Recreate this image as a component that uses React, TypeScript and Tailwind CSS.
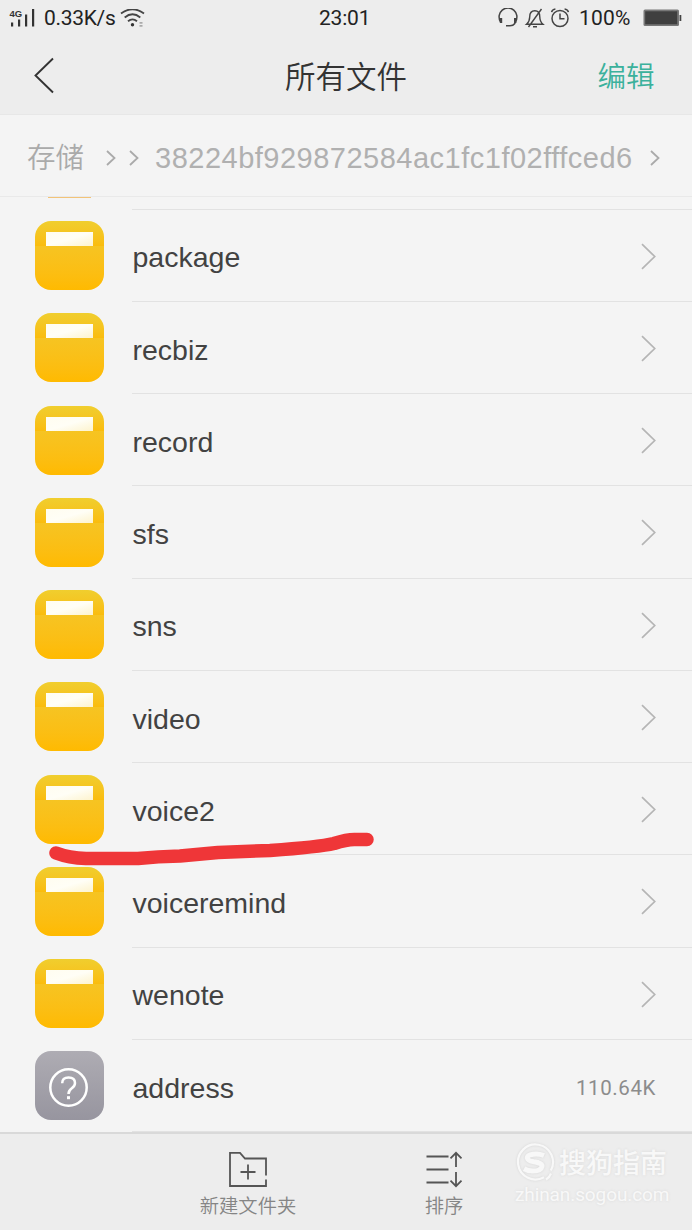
const folders = [
  "package",
  "recbiz",
  "record",
  "sfs",
  "sns",
  "video",
  "voice2",
  "voiceremind",
  "wenote",
];

function StatusBar() {
  return (
    <div className="relative flex h-[37px] items-center text-[#222] font-['Roboto','Noto_Sans',sans-serif]">
      <svg className="ml-[9px] h-[22px] w-[28px] shrink-0" viewBox="0 0 28 22" fill="#333">
        <text x="0.5" y="8.5" fontSize="9.5" fontWeight="700" fontFamily="Liberation Sans, sans-serif">4G</text>
        <rect x="2" y="14.5" width="2.2" height="4" />
        <rect x="9" y="11.5" width="2.2" height="7" />
        <rect x="16" y="6.5" width="2.2" height="12" />
        <rect x="23" y="1" width="2.2" height="17.5" />
      </svg>
      <span className="ml-[7px] w-[72px] whitespace-nowrap text-[21px] tracking-[-0.3px]">0.33K/s</span>
      <svg className="ml-[4px] h-[20px] w-[26px]" viewBox="0 0 26 20" fill="none" stroke="#444" strokeWidth="1.8">
        <path d="M1 4.5Q12.5-4 24 4.5M4.7 8.5Q12.5 2 20.3 8.5M8 12.3Q12.5 8.5 17 12.3" />
        <circle cx="12.5" cy="15.8" r="1.7" fill="#333" stroke="none" />
        <path d="M19.5 13.8h3M19.5 16.8h3" stroke="#aaa" />
      </svg>
      <span className="absolute left-[319px] text-[21px] tracking-[-0.2px]">23:01</span>
      <div className="ml-auto flex items-center pr-[9px]">
        <svg className="h-[22px] w-[76px]" viewBox="0 0 76 22" fill="none" stroke="#444" strokeWidth="1.5">
          {/* headset */}
          <path d="M3.4 13.5A8.9 8.9 0 1 1 18.6 13.5L17.6 15.8Q16.2 17.8 13 17.8H9" />
          <path d="M4 10v5M18.2 10v5" strokeWidth="2.4" />
          {/* muted bell */}
          <path d="M29.5 16.3H46Q42.8 13.5 42.8 9Q42.8 2.8 37.8 2.8Q32.7 2.8 32.7 9Q32.7 13.5 29.5 16.3ZM36 18.7h4M31.5 19L44.5 1" strokeWidth="1.4" />
          {/* alarm clock */}
          <circle cx="63" cy="10.5" r="8" />
          <path d="M63 5.6v5.2h4.5M54.6 4.1q.6-2.8 3.8-3.2M71.4 4.1q-.6-2.8-3.8-3.2" />
        </svg>
        <span className="ml-[6px] w-[55px] whitespace-nowrap text-[21px] tracking-[0.2px]">100%</span>
        <svg className="mb-[2px] ml-[9px] h-[18px] w-[40px]" viewBox="0 0 40 18">
          <rect x="0.5" y="0.5" width="35.5" height="16.5" rx="1.5" fill="#777" />
          <rect x="2.2" y="2.3" width="32" height="13" fill="#3f3f3f" />
          <path d="M36.5 6h1.8v6h-1.8z" fill="#444" />
        </svg>
      </div>
    </div>
  );
}

function SmallChevron() {
  return (
    <svg className="h-[16px] w-[10px] shrink-0" viewBox="0 0 10 16" fill="none" stroke="#aaa" strokeWidth="1.8">
      <path d="M1 1l7.5 7L1 15" />
    </svg>
  );
}

function FolderIcon() {
  return (
    <div className="h-[69px] w-[69px] shrink-0 overflow-hidden rounded-[16px]">
      <div className="flex h-[25px] justify-center bg-linear-to-b from-[#f0ce2e] to-[#fabc0c] pt-[11px]">
        <div className="h-[14px] w-[47px] bg-linear-to-br from-[#fffdf0] via-[#fffef6] to-[#fdf3cd]" />
      </div>
      <div className="h-[44px] bg-linear-to-b from-[#f6c422] to-[#ffba00]" />
    </div>
  );
}

function UnknownIcon() {
  return (
    <div className="flex h-[69px] w-[69px] shrink-0 items-center justify-center rounded-[16px] bg-linear-to-b from-[#aeacb3] to-[#97959f]">
      <svg className="mt-[4px] h-[40px] w-[40px]" viewBox="0 0 40 40" fill="none" stroke="#fff" strokeWidth="2.5">
        <circle cx="19.5" cy="19.5" r="18.2" />
        <path d="M13.2 15.2Q13.2 9.5 19.6 9.5Q26 9.5 26 15Q26 18 22.8 20.3Q19.5 22.8 19.5 26" />
        <path d="M18 28.2h3v3h-3z" fill="#fff" stroke="none" />
      </svg>
    </div>
  );
}

function Row({ name, size }: { name: string; size?: string }) {
  return (
    <div className="flex h-[92.25px] shrink-0 pl-[34.5px]">
      <div className="pt-[11.5px]">{size ? <UnknownIcon /> : <FolderIcon />}</div>
      <div className="ml-[28px] flex flex-1 items-center justify-between border-b border-[#e2e2e2] pl-px pr-[36px]">
        <span className="pt-[5px] text-[28.5px] text-[#424242]">{name}</span>
        {size ? (
          <span className="pt-[5px] font-['Roboto',sans-serif] text-[20.5px] tracking-[0.6px] text-[#8c8c8c]">{size}</span>
        ) : (
          <svg className="mt-[2px] h-[27px] w-[15px]" viewBox="0 0 15 27" fill="none" stroke="#b5b5b5" strokeWidth="1.7">
            <path d="M1 1.2l12.7 12.3L1 25.8" />
          </svg>
        )}
      </div>
    </div>
  );
}

function Watermark() {
  return (
    <div className="absolute left-[515px] top-[9px] text-[#f8f8f8] [text-shadow:0_0_3px_#d8d8d8]">
      <div className="flex items-center">
        <svg className="h-[40px] w-[40px] drop-shadow-[0_0_1px_#d4d4d4]" viewBox="0 0 40 40" fill="none" stroke="#f8f8f8">
          <path d="M35.8 27.5A17.5 17.5 0 1 0 29 34.3M31 36.5Q34.5 34.5 36 30.5" strokeWidth="2.2" />
          <path d="M29 12.5Q24 10.5 18 11.2Q11.5 12 12.5 15.5Q13 17.8 19 18.8Q27.5 20 27 23.5Q26 28 18 28Q13 28 9 25.8" strokeWidth="5" />
        </svg>
        <span className="ml-[4px] pt-[2px] text-[27px] font-medium leading-[38px]">搜狗指南</span>
      </div>
      <div className="-mt-px whitespace-nowrap font-['Roboto',sans-serif] text-[19px] font-normal leading-[26px] tracking-[-0.1px]">zhinan.sogou.com</div>
    </div>
  );
}

export default function App() {
  return (
    <div className="relative flex h-[1230px] w-[692px] flex-col overflow-hidden bg-[#f4f4f4] font-['Liberation_Sans','Noto_Sans_CJK_SC',sans-serif]">
      <header className="h-[115px] shrink-0 border-b border-[#e7e7e7] bg-[#ededed]">
        <StatusBar />
        <div className="grid h-[77px] grid-cols-3 items-center">
          <svg className="ml-[33px] h-[38px] w-[22px]" viewBox="0 0 22 38" fill="none" stroke="#333" strokeWidth="1.9">
            <path d="M20 1.5L2.5 18.5L20 35.5" />
          </svg>
          <h1 className="pt-[4px] text-center text-[30.5px] font-[350] text-[#333]">所有文件</h1>
          <span className="pr-[37.5px] pt-[4px] text-right text-[28.5px] font-[350] text-[#3bb19c]">编辑</span>
        </div>
      </header>

      <nav className="flex h-[82px] shrink-0 items-center border-b border-[#e9e9e9] pl-[27px] pt-[4px] text-[#aaa]">
        <span className="w-[57px] whitespace-nowrap pt-[2px] text-[28.5px] font-[350]">存储</span>
        <div className="ml-[22px] flex gap-[13px]">
          <SmallChevron />
          <SmallChevron />
        </div>
        <span className="ml-[16px] w-[479px] whitespace-nowrap pt-[3px] text-[29px] tracking-[0.5px] text-[#b0b0b0]">38224bf929872584ac1fc1f02fffced6</span>
        <div className="ml-[16px]">
          <SmallChevron />
        </div>
      </nav>

      <main className="flex h-[935px] shrink-0 flex-col overflow-hidden">
        {/* bottom edge of the row scrolled under the breadcrumb */}
        <div className="h-[12.5px] shrink-0 pl-[48px]">
          <div className="h-px w-[43px] bg-[#f2c378]" />
          <div className="ml-[84px] mt-[10.5px] h-px bg-[#e2e2e2]" />
        </div>
        {folders.map((name) => (
          <Row key={name} name={name} />
        ))}
        <Row name="address" size="110.64K" />
      </main>

      <footer className="relative flex h-[98px] shrink-0 border-t-2 border-[#d9d9d9] bg-[#ededed] pl-[150px] font-[350] text-[#858585]">
        <button className="flex w-[196px] flex-col items-center pt-[16px]">
          <svg className="h-[38px] w-[40px]" viewBox="0 0 40 38" fill="none" stroke="#555" strokeWidth="1.8">
            <path d="M38 25.5V8.5H17L12 2.8H2V36H38V29.5M20 14.5v15M12.5 22h15" />
          </svg>
          <span className="mt-[3px] text-[19.3px] leading-[32px]">新建文件夹</span>
        </button>
        <button className="flex w-[196px] flex-col items-center pt-[16px]">
          <svg className="h-[38px] w-[40px]" viewBox="0 0 40 38" fill="none" stroke="#555" strokeWidth="1.8">
            <path d="M2.5 6.5h22M2.5 19.5h22M2.5 32.5h22M32 17V3M26.5 8.3L32 2.8L37.5 8.3M32 22v14M26.5 30.7L32 36.2L37.5 30.7" />
          </svg>
          <span className="mt-[3px] text-[19.3px] leading-[32px]">排序</span>
        </button>
        <Watermark />
      </footer>

      {/* hand-drawn underline below voice2 */}
      <svg className="pointer-events-none absolute left-[40px] top-[825px] h-[50px] w-[345px]" viewBox="0 0 345 50" fill="none">
        <path
          d="M16 28Q29 33 46 33.5H98Q118 31.5 140 31L178 27.5L230 25.5Q279 22 294 18.5Q308 14 316 14.5H327"
          stroke="#ef3638"
          strokeWidth="13.5"
          strokeLinecap="round"
          strokeLinejoin="round"
        />
      </svg>
    </div>
  );
}
